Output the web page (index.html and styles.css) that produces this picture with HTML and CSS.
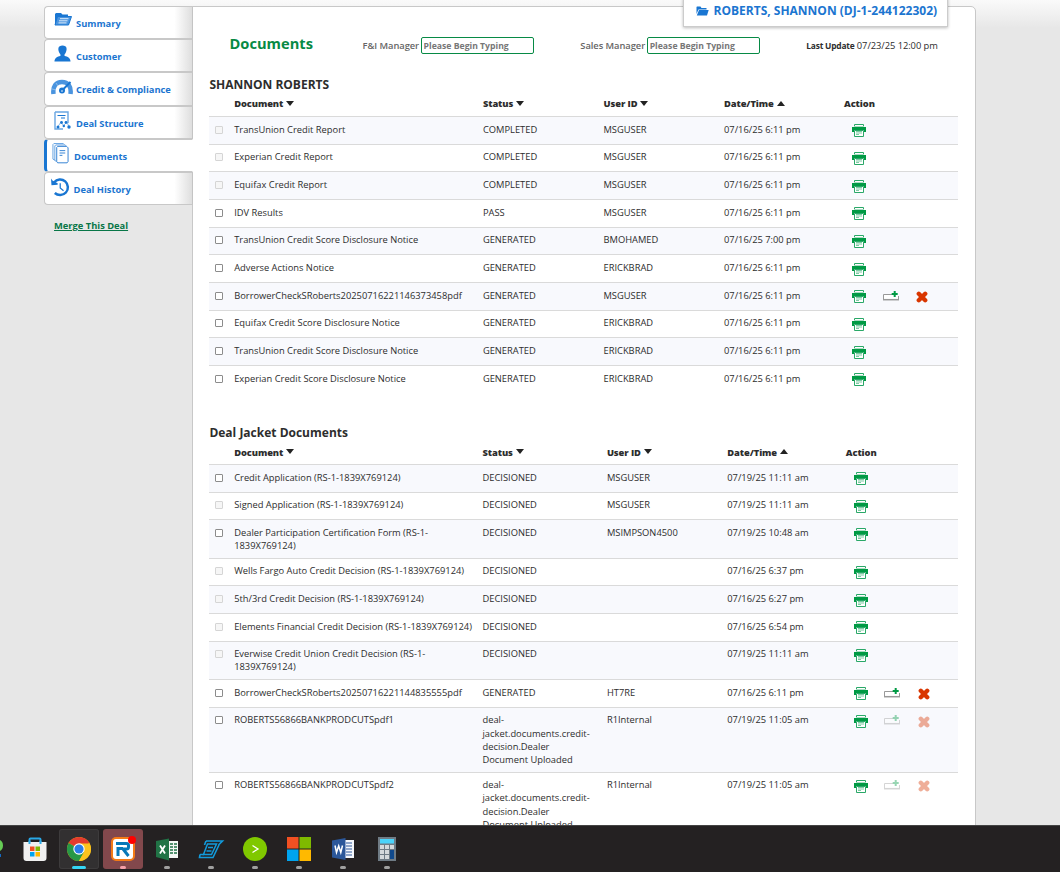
FILE: index.html
```html
<!DOCTYPE html>
<html lang="en">
<head>
<meta charset="utf-8">
<title>Documents</title>
<link rel="stylesheet" href="styles.css">
</head>
<body>
<svg class="sprite" aria-hidden="true">
  <symbol id="print" viewBox="0 0 14 13"><path d="M2.5 3V.5h9V3" fill="#fff" stroke="#2aa868"/><path d="M0 3h14v5h-2V6H2v2H0z" fill="#009a44"/><path d="M1 3h12v3H1z" fill="#009a44"/><path d="M2 2.500h10" stroke="#a9dcc2"/><path d="M2.500 6.500h9v6h-9z" fill="#fff" stroke="#2aa868"/><path d="M4 7.500h6M4 9h6M4 10.500h3" stroke="#7fcba4"/></symbol>
  <symbol id="attach" viewBox="0 0 16 10"><path d="M9 3.5H.5v5h15V5" fill="#fff" stroke="#999"/><path d="M0 8.7h16" stroke="#999" stroke-width="1.5"/><path d="M11.7 0v6M8.7 3h6" stroke="#009a44" stroke-width="2"/></symbol>
  <symbol id="remove" viewBox="0 0 12 12"><path d="M2.800 2.800l6.400 6.400M9.200 2.800L2.800 9.200" stroke="#d93600" stroke-width="4.400" stroke-linecap="round"/></symbol>
</svg>
<div class="page">
  <nav class="side">
    <a class="tab"><svg class="ic i1" viewBox="0 0 18 14"><path d="M1 13V2l1-1h5l1.500 1.500H14V5" fill="#1976d2"/><path d="M3.500 4.500h14L14.500 13H1z" fill="#4a94df" stroke="#1976d2"/><path d="M6 6.700h8.500M5 8.800h8.500M4.500 10.900h8" stroke="#dcecfb"/></svg>Summary</a>
    <a class="tab"><svg class="ic i2" viewBox="0 0 18 17"><path d="M9 0c5 0 5 4 3.500 7.500-.8 1.500-1.500 2-1.500 3 1 1.300 6.500 1 6.500 6.500H.5C.5 11.500 6 11.800 7 10.500c0-1-.7-1.500-1.500-3C4 4 4 0 9 0z" fill="#1976d2"/></svg>Customer</a>
    <a class="tab"><svg class="ic i3" viewBox="0 0 22 16"><path d="M2.500 15C1.500 7.500 5 3 11 3s9.500 4.500 8.500 12" fill="none" stroke="#4a94df" stroke-width="4.500"/><path d="M7 7L5 4M5 11l-4-1" stroke="#cfe3f7" stroke-width=".5"/><circle cx="11" cy="11.500" r="3" fill="#1976d2"/><path d="M10.500 12L19.500 3" stroke="#1976d2" stroke-width="2"/><circle cx="11" cy="12" r=".8" fill="#fff"/></svg>Credit &amp; Compliance</a>
    <a class="tab"><svg class="ic i4" viewBox="0 0 17 19"><path d="M1 1h13v11M1 1v17h8" fill="none" stroke="#6aa6e2" stroke-width="1.400"/><path d="M3.500 4.500h8M7 7h4" stroke="#1976d2" stroke-width="1.200"/><path d="M4 15.500L7 11l2.500 3.500L13 11l2 5" fill="none" stroke="#8bbbea"/><circle cx="4" cy="16" r="1.500" fill="#1976d2"/><circle cx="7.500" cy="11.500" r="1.400" fill="#1976d2"/><circle cx="12" cy="11.500" r="1.400" fill="#1976d2"/><circle cx="9.800" cy="15" r="1.200" fill="#1976d2"/><circle cx="15" cy="16" r="1.700" fill="#1976d2"/></svg>Deal Structure</a>
    <a class="tab active"><svg class="ic i5" viewBox="0 0 18 22"><path d="M3 18.500l-2-1V2l1-1h10l1 1M5 20l-2-1V3.500l1-1h10l1 1" fill="#fff" stroke="#5f9fe0"/><path d="M5 5l1-1h9.500L17 5.500V20l-1 1.400H6L5 20z" fill="#fff" stroke="#2d7dd2"/><path d="M8 8.500h6M8 11h6M8 13.500h3" stroke="#2d7dd2"/></svg>Documents</a>
    <a class="tab"><svg class="ic i6" viewBox="0 0 20 20"><path d="M3.300 4.500A8.200 8.200 0 1 1 4 15.800" fill="none" stroke="#1976d2" stroke-width="2.600"/><path d="M0 .500l1.500 2L7 5.500V7L.500 7.500z" fill="#1976d2"/><path d="M9.700 5.500v5l3.500 3" fill="none" stroke="#1976d2" stroke-width="1.300"/></svg>Deal History</a>
    <a class="merge">Merge This Deal</a>
  </nav>
  <main class="panel">
    <div class="flag"><svg class="folder" viewBox="0 0 13 10"><path d="M.5 8V1l.5-.5h3.500L5.500 2h5v1.500h-8z" fill="#1976d2"/><path d="M3 4h9.700L11 9.500H.8z" fill="#1976d2"/></svg><span>ROBERTS, SHANNON (DJ-1-244122302)</span></div>
    <header class="top">
      <h1>Documents</h1>
      <label class="fi"><span>F&amp;I Manager</span><input placeholder="Please Begin Typing"></label>
      <label class="sm"><span>Sales Manager</span><input placeholder="Please Begin Typing"></label>
      <div class="upd"><b>Last Update</b> <span>07/23/25 12:00 pm</span></div>
    </header>
    <section class="list one">
      <h2>SHANNON ROBERTS</h2>
      <div class="head"><i></i><b>Document<i class="dn"></i></b><b>Status<i class="dn"></i></b><b>User ID<i class="dn"></i></b><b>Date/Time<i class="up"></i></b><b>Action</b></div>
      <div class="row"><i class="box off"></i><p>TransUnion Credit Report</p><p>COMPLETED</p><p>MSGUSER</p><p>07/16/25 6:11 pm</p><div class="act"><svg class="pr"><use href="#print"/></svg></div></div>
      <div class="row"><i class="box off"></i><p>Experian Credit Report</p><p>COMPLETED</p><p>MSGUSER</p><p>07/16/25 6:11 pm</p><div class="act"><svg class="pr"><use href="#print"/></svg></div></div>
      <div class="row"><i class="box off"></i><p>Equifax Credit Report</p><p>COMPLETED</p><p>MSGUSER</p><p>07/16/25 6:11 pm</p><div class="act"><svg class="pr"><use href="#print"/></svg></div></div>
      <div class="row"><i class="box"></i><p>IDV Results</p><p>PASS</p><p>MSGUSER</p><p>07/16/25 6:11 pm</p><div class="act"><svg class="pr"><use href="#print"/></svg></div></div>
      <div class="row"><i class="box"></i><p>TransUnion Credit Score Disclosure Notice</p><p>GENERATED</p><p>BMOHAMED</p><p>07/16/25 7:00 pm</p><div class="act"><svg class="pr"><use href="#print"/></svg></div></div>
      <div class="row"><i class="box"></i><p>Adverse Actions Notice</p><p>GENERATED</p><p>ERICKBRAD</p><p>07/16/25 6:11 pm</p><div class="act"><svg class="pr"><use href="#print"/></svg></div></div>
      <div class="row"><i class="box"></i><p>BorrowerCheckSRoberts20250716221146373458pdf</p><p>GENERATED</p><p>MSGUSER</p><p>07/16/25 6:11 pm</p><div class="act"><svg class="pr"><use href="#print"/></svg><svg class="at"><use href="#attach"/></svg><svg class="rm"><use href="#remove"/></svg></div></div>
      <div class="row"><i class="box"></i><p>Equifax Credit Score Disclosure Notice</p><p>GENERATED</p><p>ERICKBRAD</p><p>07/16/25 6:11 pm</p><div class="act"><svg class="pr"><use href="#print"/></svg></div></div>
      <div class="row"><i class="box"></i><p>TransUnion Credit Score Disclosure Notice</p><p>GENERATED</p><p>ERICKBRAD</p><p>07/16/25 6:11 pm</p><div class="act"><svg class="pr"><use href="#print"/></svg></div></div>
      <div class="row"><i class="box"></i><p>Experian Credit Score Disclosure Notice</p><p>GENERATED</p><p>ERICKBRAD</p><p>07/16/25 6:11 pm</p><div class="act"><svg class="pr"><use href="#print"/></svg></div></div>
    </section>
    <section class="list two">
      <h2>Deal Jacket Documents</h2>
      <div class="head"><i></i><b>Document<i class="dn"></i></b><b>Status<i class="dn"></i></b><b>User ID<i class="dn"></i></b><b>Date/Time<i class="up"></i></b><b>Action</b></div>
      <div class="row"><i class="box"></i><p>Credit Application (RS-1-1839X769124)</p><p>DECISIONED</p><p>MSGUSER</p><p>07/19/25 11:11 am</p><div class="act"><svg class="pr"><use href="#print"/></svg></div></div>
      <div class="row"><i class="box off"></i><p>Signed Application (RS-1-1839X769124)</p><p>DECISIONED</p><p>MSGUSER</p><p>07/19/25 11:11 am</p><div class="act"><svg class="pr"><use href="#print"/></svg></div></div>
      <div class="row"><i class="box"></i><p>Dealer Participation Certification Form (RS-1-<br>1839X769124)</p><p>DECISIONED</p><p>MSIMPSON4500</p><p>07/19/25 10:48 am</p><div class="act"><svg class="pr"><use href="#print"/></svg></div></div>
      <div class="row"><i class="box off"></i><p>Wells Fargo Auto Credit Decision (RS-1-1839X769124)</p><p>DECISIONED</p><p></p><p>07/16/25 6:37 pm</p><div class="act"><svg class="pr"><use href="#print"/></svg></div></div>
      <div class="row"><i class="box off"></i><p>5th/3rd Credit Decision (RS-1-1839X769124)</p><p>DECISIONED</p><p></p><p>07/16/25 6:27 pm</p><div class="act"><svg class="pr"><use href="#print"/></svg></div></div>
      <div class="row"><i class="box off"></i><p>Elements Financial Credit Decision (RS-1-1839X769124)</p><p>DECISIONED</p><p></p><p>07/16/25 6:54 pm</p><div class="act"><svg class="pr"><use href="#print"/></svg></div></div>
      <div class="row"><i class="box off"></i><p>Everwise Credit Union Credit Decision (RS-1-<br>1839X769124)</p><p>DECISIONED</p><p></p><p>07/19/25 11:11 am</p><div class="act"><svg class="pr"><use href="#print"/></svg></div></div>
      <div class="row"><i class="box"></i><p>BorrowerCheckSRoberts20250716221144835555pdf</p><p>GENERATED</p><p>HT7RE</p><p>07/16/25 6:11 pm</p><div class="act"><svg class="pr"><use href="#print"/></svg><svg class="at"><use href="#attach"/></svg><svg class="rm"><use href="#remove"/></svg></div></div>
      <div class="row"><i class="box"></i><p>ROBERTS56866BANKPRODCUTSpdf1</p><p>deal-<br>jacket.documents.credit-<br>decision.Dealer<br>Document Uploaded</p><p>R1Internal</p><p>07/19/25 11:05 am</p><div class="act"><svg class="pr"><use href="#print"/></svg><svg class="at dim"><use href="#attach"/></svg><svg class="rm dim"><use href="#remove"/></svg></div></div>
      <div class="row"><i class="box"></i><p>ROBERTS56866BANKPRODCUTSpdf2</p><p>deal-<br>jacket.documents.credit-<br>decision.Dealer<br>Document Uploaded</p><p>R1Internal</p><p>07/19/25 11:05 am</p><div class="act"><svg class="pr"><use href="#print"/></svg><svg class="at dim"><use href="#attach"/></svg><svg class="rm dim"><use href="#remove"/></svg></div></div>
    </section>
  </main>
</div>
<footer class="taskbar">
  <div class="edge"><svg viewBox="0 0 4 20"><path d="M0 1c4 2 4 9 0 11z" fill="#6c5"/><path d="M0 15h1v3H0z" fill="#1668c0"/></svg></div>
  <div class="app"><svg viewBox="0 0 24 24"><path d="M6.500 6V2.500a1 1 0 0 1 1-1h9a1 1 0 0 1 1 1V6" fill="none" stroke="#29a9e8" stroke-width="2"/><path d="M.5 5h23v16a3 3 0 0 1-3 3h-17a3 3 0 0 1-3-3z" fill="#f0f0f0"/><path d="M6.500 7V4M17.500 7V4" stroke="#29a9e8" stroke-width="2"/><path d="M7 9.500h4.500V14H7z" fill="#f25022"/><path d="M12.500 9.500H17V14h-4.500z" fill="#7fba00"/><path d="M7 15h4.500v4.500H7z" fill="#00a4ef"/><path d="M12.500 15H17v4.500h-4.500z" fill="#ffb900"/></svg></div>
  <div class="app open chrome"><svg viewBox="0 0 24 24"><circle cx="12" cy="12" r="12" fill="#fbbc05"/><path d="M12 12L1.600 6A12 12 0 0 1 22.400 6z" fill="#e33b2e"/><path d="M12 12L1.600 6A12 12 0 0 0 12 24l5.200-9z" fill="#279847"/><path d="M12 6.500h10.700a12 12 0 0 1-10.700 17.500l5-9z" fill="#fcc31e"/><circle cx="12" cy="12" r="5.700" fill="#fff"/><circle cx="12" cy="12" r="4.600" fill="#2a7de9"/></svg></div>
  <div class="app open ring"><svg viewBox="0 0 24 24"><rect width="24" height="24" rx="5" fill="#f47a16"/><rect x="2" y="2" width="20" height="20" rx="3" fill="#fff"/><path d="M7 19v-7.500h5M5 6.500h10.500q2 0 2 2v1.500q0 2-2 2H12l5.500 7" fill="none" stroke="#0878b8" stroke-width="3"/><circle cx="21" cy="3" r="4" fill="#f00"/></svg></div>
  <div class="app open"><svg viewBox="0 0 24 24"><path d="M13 4h10v17H13z" fill="#f3f7f4"/><path d="M15 7h3M19 7h3M15 10h3M19 10h3M15 13h3M19 13h3M15 16h3M19 16h3" stroke="#217346" stroke-width="1.600"/><path d="M1 4l13-2.500v22L1 20z" fill="#217346"/><path d="M5 8.500l5 8M10 8.500l-5 8" stroke="#fff" stroke-width="1.800"/></svg></div>
  <div class="app open"><svg viewBox="0 0 24 24"><path d="M7 4h16.500l-4 4M7 4L5.500 8M1 17.500h4M1 17.500L.500 20.500H14L20 8" fill="none" stroke="#129bdc" stroke-width="1.600"/><path d="M8.500 7h9l-5 10.500H4.500zM9 10.500h5M7.500 14h5" fill="none" stroke="#129bdc" stroke-width="1.500"/></svg></div>
  <div class="app open"><svg viewBox="0 0 24 24"><circle cx="12" cy="12" r="12" fill="#80c800"/><path d="M9.500 8.500l5.500 3.500-5.500 3.500" fill="none" stroke="#fff" stroke-width="1.300"/></svg></div>
  <div class="app open"><svg viewBox="0 0 24 24"><path d="M0 0h11.500v11.500H0z" fill="#f25022"/><path d="M12.500 0H24v11.500H12.500z" fill="#7fba00"/><path d="M0 12.500h11.500V24H0z" fill="#00a4ef"/><path d="M12.500 12.500H24V24H12.500z" fill="#ffb900"/></svg></div>
  <div class="app open"><svg viewBox="0 0 24 24"><path d="M13 3h10v18H13z" fill="#f4f7fc"/><path d="M15 6h6M15 9h6M15 12h6M15 15h6M15 18h6" stroke="#2b579a" stroke-width="1.100"/><path d="M1 3.500L14.500 1v22L1 20.500z" fill="#2b579a"/><path d="M4 8.500l1.500 7 2.200-6.500 2.100 6.500 1.700-7" fill="none" stroke="#fff" stroke-width="1.500"/></svg></div>
  <div class="app open"><svg viewBox="0 0 24 24"><path d="M3 0h18v24H3z" fill="#6f7b85"/><path d="M5 2h14v4.500H5z" fill="#4bd3fa"/><path d="M5 8h4v4H5zM10 8h4v4h-4zM15 8h4v4h-4zM5 13h4v4H5zM10 13h4v4h-4zM5 18h4v4H5zM10 18h4v4h-4z" fill="#d5d9dc"/><path d="M15 13h4v9h-4z" fill="#10498c"/></svg></div>
</footer>
</body>
</html>
```

FILE: styles.css
```css
* { box-sizing: border-box; }
body {
  margin: 0;
  width: 1060px;
  height: 872px;
  overflow: hidden;
  display: flex;
  flex-direction: column;
  font-family: "Open Sans", sans-serif;
  font-size: 9.33px;
  color: #2d2d2d;
  background: linear-gradient(#fafafa, #e7e7e7 28px, #e7e7e7);
}
h1, h2, p { margin: 0; }
.sprite { display: none; }
.page {
  height: 825px;
  overflow: hidden;
  display: flex;
  align-items: flex-start;
  padding: 6px 0 0 44px;
}
.side { width: 149px; position: relative; z-index: 1; }
.tab {
  display: flex;
  align-items: center;
  height: 33.200px;
  padding-top: 1.800px;
  border: 1px solid #c8c8c8;
  border-right-color: #c4c4c4;
  border-radius: 4px 0 0 4px;
  background: linear-gradient(90deg, #fff 88%, #dedede);
  color: #1b75d0;
  font-weight: 700;
  white-space: nowrap;
}
.tab.active { background: #fff; border-right-color: #fff; border-left: 3px solid #1976d2; }
.ic { flex: none; }
.i1 { width: 18px; height: 14px; margin: -8px 4px 0 9px; }
.i2 { width: 17px; height: 17px; margin: -6px 5px 0 9px; }
.i3 { width: 22px; height: 16px; margin: -5px 3px 0 6px; }
.i4 { width: 17px; height: 19px; margin: -6px 5px 0 9px; }
.i5 { width: 17px; height: 22px; margin: -7px 5px 0 5px; }
.i6 { width: 19px; height: 19px; margin: -4px 3.500px 0 6px; }
.merge {
  display: block;
  margin: 14px 0 0 10px;
  color: #087647;
  font-weight: 700;
  text-decoration: underline;
}
.panel {
  position: relative;
  width: 784px;
  height: 900px;
  margin-left: -1px;
  background: #fff;
  border: 1px solid #c8c8c8;
  border-radius: 0 5px 0 0;
  padding: 0 17px 0 16px;
}
.flag {
  position: absolute;
  top: -10px;
  right: 27px;
  width: 265px;
  height: 30px;
  padding: 0 10px 4px 12px;
  display: flex;
  align-items: center;
  gap: 4.500px;
  background: #fff;
  border: 1px solid #ccc;
  box-shadow: 0 1px 3px #0004;
  color: #1b75d0;
  font-size: 12px;
  font-weight: 700;
  white-space: nowrap;
}
.folder { flex: none; width: 13px; height: 10px; margin-top: 2px; }
.top { display: flex; align-items: center; height: 23px; margin-top: 27px; white-space: nowrap; }
h1 { width: 133px; margin-top: -5px; padding-left: 20.500px; font-size: 14.67px; color: #078a45; }
label { display: flex; align-items: center; gap: 2px; color: #666; font-weight: 600; letter-spacing: -.04px; }
.fi { margin-left: 20.500px; width: 217.800px; }
.sm { width: 226px; }
input {
  width: 113px;
  height: 17px;
  margin-left: -.5px;
  padding: 0 2px;
  border: 1px solid #078a45;
  border-radius: 2px;
  font: 700 8.670px "Open Sans", sans-serif;
}
input::placeholder { color: #777; opacity: 1; }
.upd { letter-spacing: -.05px; }
.upd b { font-size: 8.400px; font-weight: 700; letter-spacing: -.2px; }
.list h2 { height: 20px; padding-left: .4px; font-size: 12px; line-height: 20px; }
.one { padding-top: 18px; }
.two { padding-top: 30px; }
.one .head, .one .row { grid-template-columns: 25.200px 248.700px 120.600px 120.500px 120px 1fr; }
.two .head, .two .row { grid-template-columns: 25.200px 248.300px 124.400px 120.400px 118.500px 1fr; }
.head, .row { display: grid; }
.head { height: 21.100px; line-height: 18px; font-weight: 600; letter-spacing: -.08px; }
.two .head { height: 21.400px; line-height: 19px; }
.dn, .up { display: inline-block; margin: 0 0 1.500px 3px; border: 4.500px solid transparent; }
.dn { border-top: 5px solid #222; border-bottom: 0; }
.up { border-bottom: 5px solid #222; border-top: 0; }
.row {
  min-height: 27.670px;
  padding: 5.500px 0;
  border-top: 1px solid #dadada;
  line-height: 13.200px;
  white-space: nowrap;
}
.row:nth-child(odd) { background: #f8f9fd; }
.box { width: 8px; height: 8px; margin: 3px 0 0 6px; border: 1px solid #8c8c8c; border-radius: 1px; background: #fff; }
.box.off { border-color: #d5d5d5; background: #f6f6f6; }
.act { display: flex; height: 14px; padding-left: 7.900px; }
.two .act { padding-left: 8.500px; }
.pr { flex: none; width: 14px; height: 13px; margin-top: 1.800px; }
.at { flex: none; width: 16px; height: 10px; margin: 2px 0 0 17px; }
.two .at { margin: 2px 1px 0 16px; }
.rm { flex: none; width: 12px; height: 12px; margin: 2.300px 0 0 17px; }
.dim { opacity: .4; }
.taskbar {
  height: 47px;
  display: flex;
  align-items: center;
  background: #242122;
  border-top: 1px solid #444;
}
.edge { width: 13px; height: 20px; }
.edge svg { width: 4px; height: 20px; }
.app {
  position: relative;
  width: 40px;
  height: 40px;
  margin-right: 4px;
  display: grid;
  place-items: center;
  border-radius: 3px;
}
.app > svg { width: 24px; height: 24px; overflow: visible; }
.edge + .app { margin-left: 2px; }
.open::after {
  content: "";
  position: absolute;
  bottom: 0;
  left: 17px;
  width: 6px;
  height: 3px;
  border-radius: 2px;
  background: #a0a0a0;
}
.chrome { background: #323031; box-shadow: 0 0 0 1px #3d3b3c inset; }
.chrome::after { left: 13px; width: 14px; background: #35d5f5; }
.ring { background: #82484c; }
.ring::after { background: #f5a0a8; }
```
